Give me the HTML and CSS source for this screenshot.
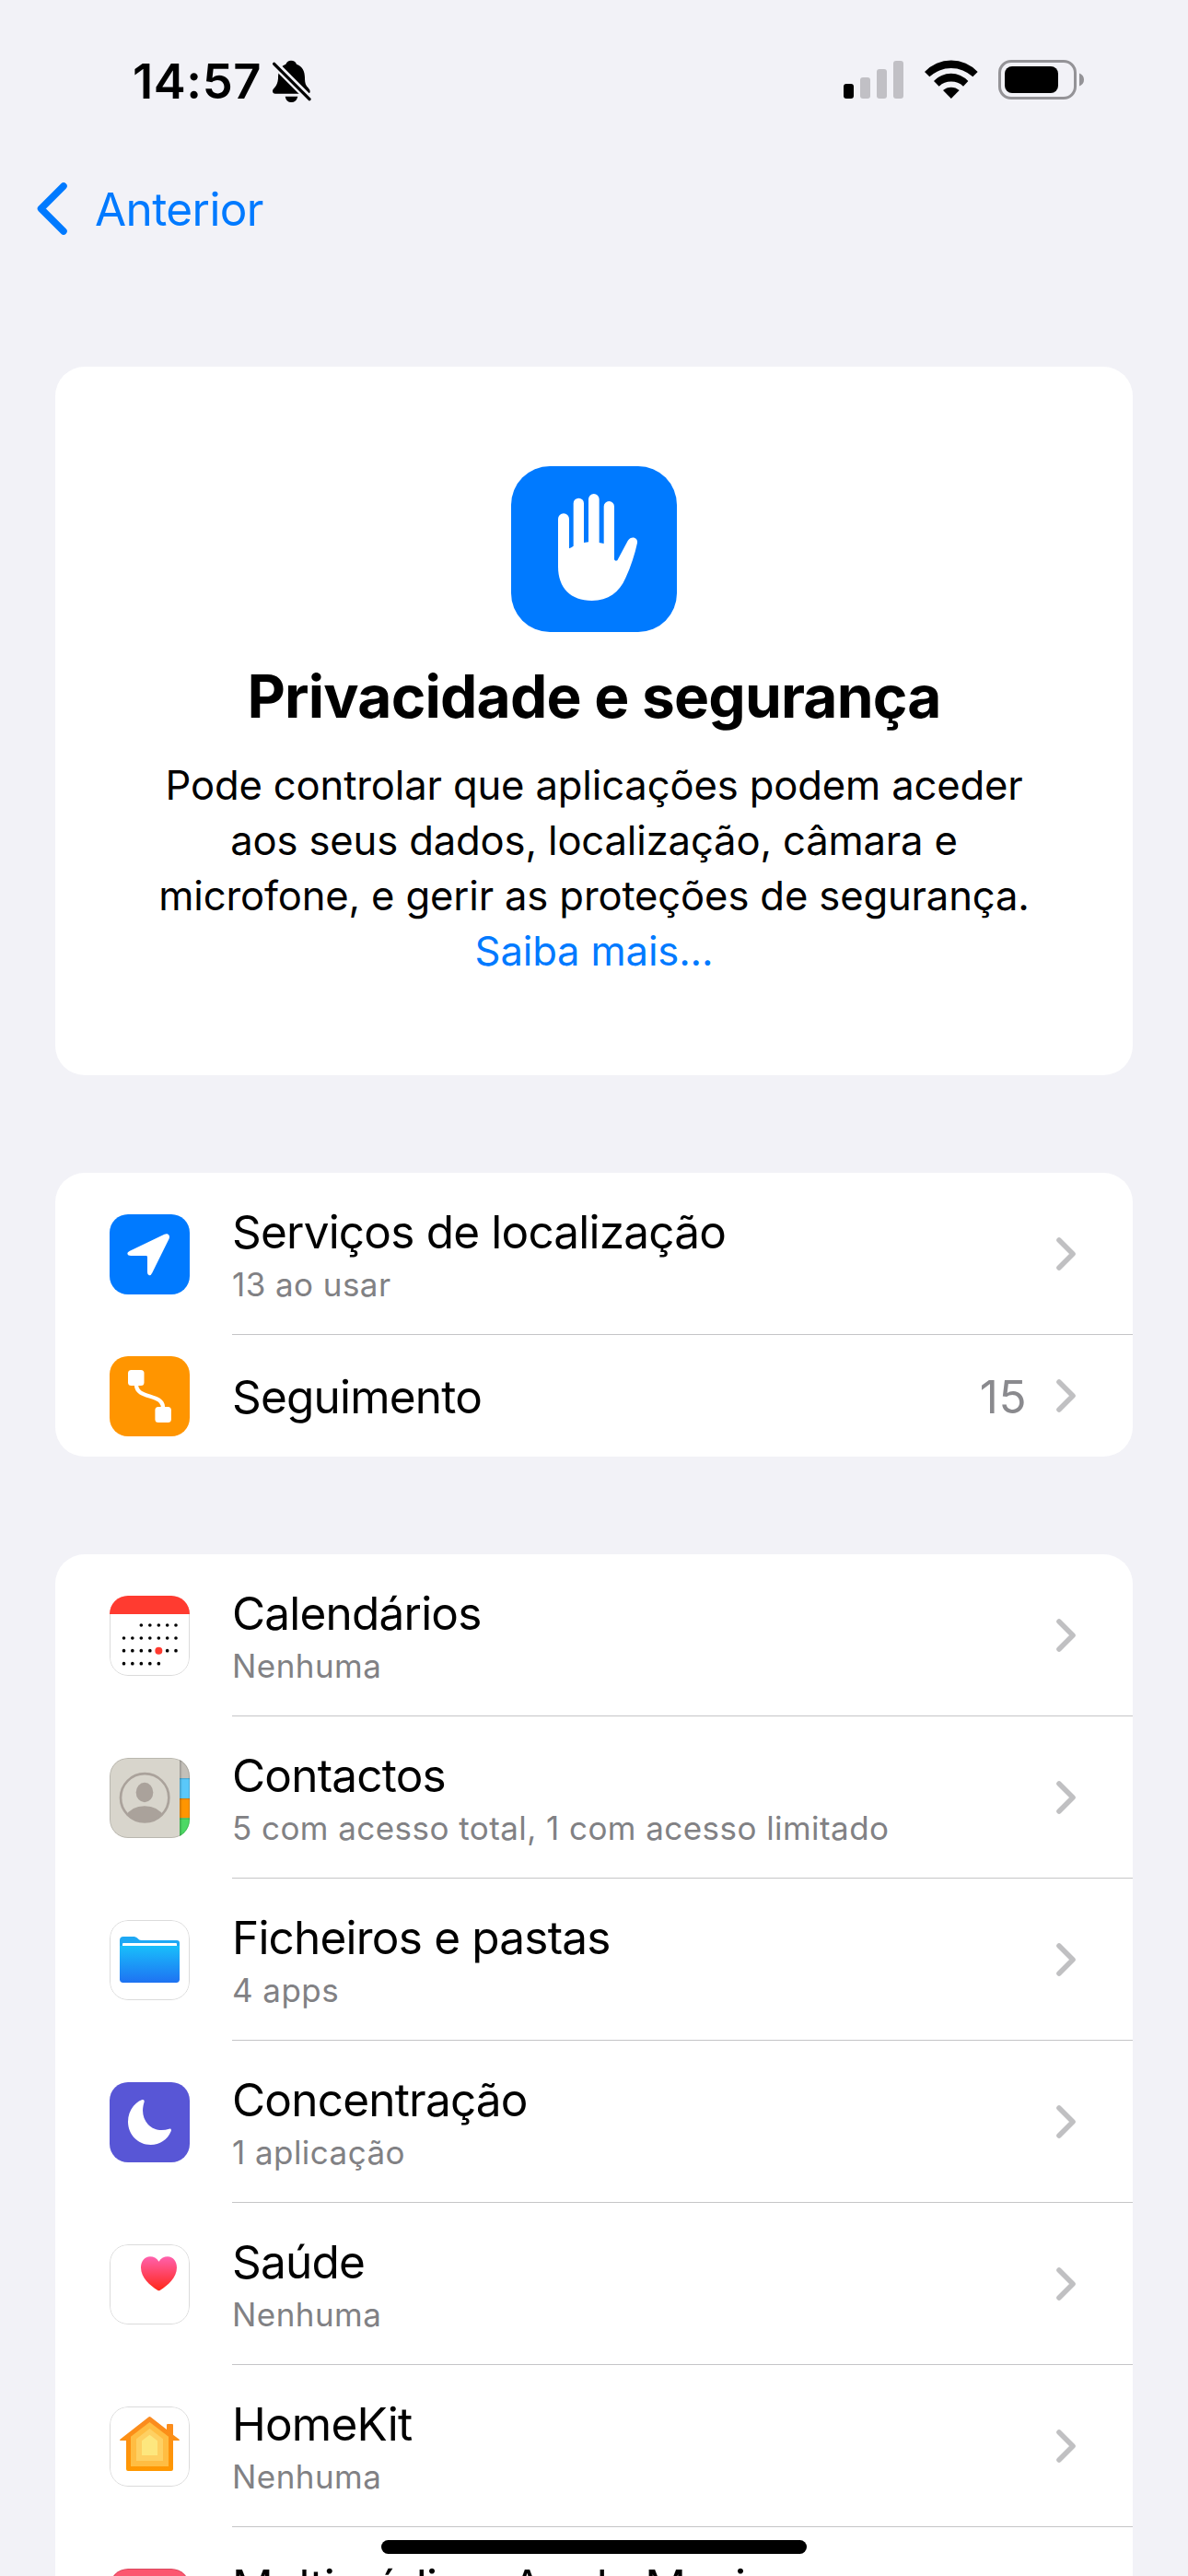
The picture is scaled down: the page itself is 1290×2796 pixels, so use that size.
FILE: index.html
```html
<!DOCTYPE html>
<html lang="pt">
  <head>
    <meta charset="UTF-8">
    <meta name="viewport" content="width=device-width, initial-scale=1.0">
    <title>Privacidade e segurança</title>
    <link rel="stylesheet" href="styles.css">
  </head>
  <body>
    <div class="status-bar">
      <span class="time">14:57</span>
      <svg class="bell" viewBox="888 104 126 138">
        <path d="M948 106Q962 106 966 118C985 124 993 142 993 162C993 182 997 188 1005 196Q1012 203 1010 210Q1008 214 1000 214H897Q888 214 888 205C889 196 904 192 906 165C906 150 908 125 931 118Q936 106 948 106Z"/>
        <path d="M929 223H970Q965 242 949 242Q933 242 929 223Z"/>
        <path d="M885 108L1017 240" stroke="#f2f2f7" stroke-width="25"/>
        <path d="M893 117L1008 232" stroke="#000" stroke-width="10" stroke-linecap="round"/>
      </svg>
      <div class="status-icons">
        <svg class="signal" viewBox="0 0 65 41">
          <rect x="0" y="25" width="11" height="16" rx="3"/>
          <rect x="18" y="18" width="11" height="23" rx="3" fill="#c1c0c5"/>
          <rect x="36" y="9" width="11" height="32" rx="3" fill="#c1c0c5"/>
          <rect x="54" y="0" width="11" height="41" rx="3" fill="#c1c0c5"/>
        </svg>
        <svg class="wifi" viewBox="371 75 174 126">
          <path d="M371 114A118 118 0 0 1 544 114L528 130A103 103 0 0 0 387 130Z"/>
          <path d="M401 144A76 76 0 0 1 513 144L497 161A59 59 0 0 0 418 161Z"/>
          <path d="M431 174A40 40 0 0 1 484 174L457.500 201Z"/>
        </svg>
        <svg class="battery" viewBox="0 0 93 43">
          <rect x="1.500" y="1.500" width="82" height="40" rx="12.500" fill="none" stroke="#949397" stroke-width="3"/>
          <rect x="7" y="7" width="58" height="29" rx="8"/>
          <path d="M88 14.500Q93 16.500 93 21.500T88 28.500Z" fill="#949397"/>
        </svg>
      </div>
    </div>

    <div class="nav-bar">
      <svg class="back-icon" viewBox="0 0 33 57">
        <path d="M29 4L4.500 28.500L29 53" fill="none" stroke="#007aff" stroke-width="7.500" stroke-linecap="round" stroke-linejoin="round"/>
      </svg>
      <a class="back-link">Anterior</a>
    </div>

    <div class="card hero">
      <svg class="hero-icon" viewBox="45 48 540 540">
        <rect x="45" y="48" width="540" height="540" fill="#007aff"/>
        <path d="M198 220a18 18 0 0 1 36 0V316Q241 313 248 308V169a17 17 0 0 1 34 0V297L297 295V155.500a17.500 17.500 0 0 1 35 0V297L347 300V179a17 17 0 0 1 34 0V352Q384 359 391 355L425 291C436 273 459 280 456 298C448 335 435 376 418 412C397 460 362 486 308 486C240 486 198 445 198 375Z" fill="#fff"/>
      </svg>
      <h1>Privacidade e segurança</h1>
      <p>Pode controlar que aplicações podem aceder<br>aos seus dados, localização, câmara e<br>microfone, e gerir as proteções de segurança.<br><a>Saiba mais...</a></p>
    </div>

    <div class="card list">
      <div class="row">
        <svg class="icon" viewBox="0 0 87 87">
          <rect width="87" height="87" fill="#007aff"/>
          <path d="M59.500 21.800L22 39.800Q19 41.300 19.300 43Q19.800 45 23 45H39.500Q41 45 41 46.300V63Q41 66 43 66.300Q45 66.500 46.300 63.500L64.600 26.500C66 23 63.500 20 59.500 21.800Z" fill="#fff"/>
        </svg>
        <div class="row-body">
          <div class="labels">
            <div class="title">Serviços de localização</div>
            <div class="subtitle">13 ao usar</div>
          </div>
          <svg class="chevron" viewBox="0 0 21 36"><path d="M3 3L18 18L3 33"/></svg>
        </div>
      </div>
      <div class="row short">
        <svg class="icon" viewBox="0 0 87 87">
          <rect width="87" height="87" fill="#ff9500"/>
          <rect x="20" y="15" width="17.500" height="17" rx="3.500" fill="#fff"/>
          <rect x="49.400" y="55" width="17.500" height="17" rx="3.500" fill="#fff"/>
          <path d="M29 31C29 47 58 40 58 56" fill="none" stroke="#fff" stroke-width="4.300"/>
        </svg>
        <div class="row-body">
          <div class="labels">
            <div class="title">Seguimento</div>
          </div>
          <span class="value">15</span>
          <svg class="chevron" viewBox="0 0 21 36"><path d="M3 3L18 18L3 33"/></svg>
        </div>
      </div>
    </div>

    <div class="card list">
      <div class="row">
        <svg class="icon" viewBox="57 66 261 261">
          <rect x="57" y="66" width="261" height="261" fill="#fff"/>
          <rect class="outline" x="58.500" y="67.500" width="258" height="258" rx="58"/>
          <path d="M57 66H318V126H57Z" fill="#ff3b30"/>
          <g fill="none" stroke="#000" stroke-width="11" stroke-linecap="round">
            <path d="M160 162h0M188.500 162h0M217 162h0M245 162h0M273 162h0"/>
            <path d="M103.500 204h0M131.500 204h0M160 204h0M188.500 204h0M217 204h0M245 204h0M273 204h0"/>
            <path d="M103.500 245h0M131.500 245h0M160 245h0M188.500 245h0M245 245h0M273 245h0"/>
            <path d="M103.500 287h0M131.500 287h0M160 287h0M188.500 287h0M217 287h0"/>
          </g>
          <circle cx="217" cy="245" r="12" fill="#ff3b30"/>
        </svg>
        <div class="row-body">
          <div class="labels">
            <div class="title">Calendários</div>
            <div class="subtitle">Nenhuma</div>
          </div>
          <svg class="chevron" viewBox="0 0 21 36"><path d="M3 3L18 18L3 33"/></svg>
        </div>
      </div>
      <div class="row">
        <svg class="icon" viewBox="57 594 261 261">
          <defs>
            <clipPath id="avatar"><circle cx="171.500" cy="724" r="80"/></clipPath>
            <linearGradient id="edge"><stop offset="0" stop-color="#000" stop-opacity=".22"/><stop offset="1" stop-color="#000" stop-opacity="0"/></linearGradient>
          </defs>
          <rect x="57" y="594" width="261" height="261" fill="#d8d5cc"/>
          <path d="M285 594H318V660H285Z" fill="#c4c0b9"/>
          <path d="M285 660H318V726H285Z" fill="#5ac8fa"/>
          <path d="M285 726H318V790H285Z" fill="#ff9500"/>
          <path d="M285 790H318V855H285Z" fill="#4cd964"/>
          <path d="M285 660H318V664H285ZM285 726H318V730H285ZM285 790H318V794H285Z" fill="#000" opacity=".15"/>
          <rect x="285" y="594" width="9" height="261" fill="url(#edge)"/>
          <g clip-path="url(#avatar)" fill="#aaa29b">
            <ellipse cx="171" cy="706.500" rx="28" ry="32"/>
            <path d="M108 785Q128 751 171 751T235 785V810H108Z"/>
          </g>
          <circle cx="171.500" cy="724" r="78.500" fill="none" stroke="#aaa29b" stroke-width="8"/>
          <rect class="outline" x="58.500" y="595.500" width="258" height="258" rx="58"/>
        </svg>
        <div class="row-body">
          <div class="labels">
            <div class="title">Contactos</div>
            <div class="subtitle">5 com acesso total, 1 com acesso limitado</div>
          </div>
          <svg class="chevron" viewBox="0 0 21 36"><path d="M3 3L18 18L3 33"/></svg>
        </div>
      </div>
      <div class="row">
        <svg class="icon" viewBox="57 72 261 261">
          <defs>
            <linearGradient id="folder" x2="0" y2="1"><stop offset="0" stop-color="#19bffb"/><stop offset="1" stop-color="#1e72f2"/></linearGradient>
          </defs>
          <rect x="57" y="72" width="261" height="261" fill="#fff"/>
          <path d="M90 160V138Q90 126 102 126H136C148 126 150 138 160 138H276Q285 138 285 147V160Z" fill="#1ea8f4"/>
          <rect x="99" y="147" width="177" height="12" rx="3" fill="#fff"/>
          <path d="M90 156H285V265Q285 276 274 276H101Q90 276 90 265Z" fill="url(#folder)"/>
          <rect class="outline" x="58.500" y="73.500" width="258" height="258" rx="58"/>
        </svg>
        <div class="row-body">
          <div class="labels">
            <div class="title">Ficheiros e pastas</div>
            <div class="subtitle">4 apps</div>
          </div>
          <svg class="chevron" viewBox="0 0 21 36"><path d="M3 3L18 18L3 33"/></svg>
        </div>
      </div>
      <div class="row">
        <svg class="icon" viewBox="57 600 261 261">
          <rect x="57" y="600" width="261" height="261" fill="#5856d6"/>
          <path d="M163 657Q171 655 170 664C160 694 166 720 182 737C200 756 226 760 251 752Q260 750 257 760C246 788 220 804 191 804C150 804 117 771 117 729C117 696 135 668 163 657Z" fill="#fff"/>
        </svg>
        <div class="row-body">
          <div class="labels">
            <div class="title">Concentração</div>
            <div class="subtitle">1 aplicação</div>
          </div>
          <svg class="chevron" viewBox="0 0 21 36"><path d="M3 3L18 18L3 33"/></svg>
        </div>
      </div>
      <div class="row">
        <svg class="icon" viewBox="57 48 261 261">
          <defs>
            <linearGradient id="heart" x2="0" y2="1"><stop offset="0" stop-color="#ff61ad"/><stop offset="1" stop-color="#ff2719"/></linearGradient>
          </defs>
          <rect x="57" y="48" width="261" height="261" fill="#fff"/>
          <path d="M217.500 104C224 93 235 88 246 88C264 88 276 103 276 124C276 157 246 183 222 197Q217.500 200 213 197C189 183 159 157 159 124C159 103 171 88 189 88C200 88 211 93 217.500 104Z" fill="url(#heart)"/>
          <rect class="outline" x="58.500" y="49.500" width="258" height="258" rx="58"/>
        </svg>
        <div class="row-body">
          <div class="labels">
            <div class="title">Saúde</div>
            <div class="subtitle">Nenhuma</div>
          </div>
          <svg class="chevron" viewBox="0 0 21 36"><path d="M3 3L18 18L3 33"/></svg>
        </div>
      </div>
      <div class="row">
        <svg class="icon" viewBox="57 576 261 261">
          <defs>
            <linearGradient id="house" x2="0" y2="1"><stop offset="0" stop-color="#fa8a22"/><stop offset="1" stop-color="#ff9800"/></linearGradient>
          </defs>
          <rect x="57" y="576" width="261" height="261" fill="#fff"/>
          <path d="M183 611Q187.500 607 192 611L243 651V636Q243 633 246 633H261Q264 633 264 636V668L284 683Q287 687 282 687H264V780Q264 786 258 786H117Q111 786 111 780V687H93Q88 687 91 683Z" fill="url(#house)"/>
          <path d="M187.500 627L249 674V771H126V674Z" fill="#ffbd42"/>
          <path d="M187.500 648L231 682V753H144V682Z" fill="#fed062"/>
          <path d="M187.500 668L213 688V735H162V688Z" fill="#fde77e"/>
          <rect class="outline" x="58.500" y="577.500" width="258" height="258" rx="58"/>
        </svg>
        <div class="row-body">
          <div class="labels">
            <div class="title">HomeKit</div>
            <div class="subtitle">Nenhuma</div>
          </div>
          <svg class="chevron" viewBox="0 0 21 36"><path d="M3 3L18 18L3 33"/></svg>
        </div>
      </div>
      <div class="row">
        <svg class="icon" viewBox="0 0 87 87">
          <rect width="87" height="87" fill="#fc5770"/>
          <rect class="outline thin" x=".5" y=".5" width="86" height="86" rx="19.500"/>
        </svg>
        <div class="row-body">
          <div class="labels top">
            <div class="title">Multimédia e Apple Music</div>
          </div>
        </div>
      </div>
    </div>

    <div class="home-indicator"></div>
  </body>
</html>
```

FILE: styles.css
```css
* {
  box-sizing: border-box;
}

body {
  font-family: Inter, "Liberation Sans", sans-serif;
  background-color: #f2f2f7;
  color: #000;
  margin: 0;
  height: 2796px;
  overflow: hidden;
}

svg {
  display: block;
  flex: none;
}

a {
  color: #007aff;
  text-decoration: none;
}

.status-bar {
  display: flex;
  height: 197px;
  padding: 58px 113px 0 144px;
}

.time {
  width: 152px;
  font-size: 52.5px;
  font-weight: 600;
  line-height: 60px;
  letter-spacing: 0.6px;
}

.bell {
  width: 42px;
  height: 46px;
  margin-top: 7px;
}

.status-icons {
  display: flex;
  margin-left: auto;
  padding-top: 7px;
}

.signal {
  width: 65px;
  height: 41px;
  margin-top: 1px;
}

.wifi {
  width: 58px;
  height: 42px;
  margin-left: 23px;
}

.battery {
  width: 93px;
  height: 43px;
  margin-left: 22px;
}

.nav-bar {
  display: flex;
  height: 201px;
  padding-left: 40px;
}

.back-icon {
  width: 33px;
  height: 57px;
  margin-top: 1px;
}

.back-link {
  margin-left: 30px;
  font-size: 49.5px;
  line-height: 60px;
  letter-spacing: -0.6px;
}

.card {
  margin: 0 60px 106px;
  background-color: #fff;
  border-radius: 32px;
  overflow: hidden;
}

.hero {
  display: flex;
  flex-direction: column;
  align-items: center;
  height: 769px;
  padding-top: 108px;
  text-align: center;
}

.hero-icon {
  width: 180px;
  height: 180px;
  border-radius: 42px;
}

h1 {
  margin: 30px 0 27px;
  font-size: 64px;
  font-weight: 700;
  line-height: 80px;
  letter-spacing: -0.8px;
}

p {
  margin: 0;
  font-size: 43.6px;
  line-height: 60px;
  letter-spacing: -0.15px;
  white-space: nowrap;
}

.row {
  display: flex;
  align-items: center;
  height: 176px;
  padding-left: 59px;
}

/* the last row runs off the bottom of the screen */
.row:nth-child(7) {
  align-items: flex-start;
  height: 53px;
}

.icon {
  width: 87px;
  height: 87px;
  margin-top: 1px;
  border-radius: 20px;
}

.row:nth-child(7) .icon {
  margin-top: 45px;
}

.outline {
  fill: none;
  stroke: rgba(0, 0, 0, 0.14);
  stroke-width: 3;
}

.thin {
  stroke-width: 1;
}

.row-body {
  display: flex;
  align-items: center;
  flex: 1;
  height: 100%;
  margin-left: 46px;
  padding: 2px 62px 0 0;
  border-bottom: 1px solid #c5c5c7;
}

.row:last-child .row-body {
  border-bottom: none;
}

.short {
  height: 132px;
}

.labels {
  flex: 1;
  white-space: nowrap;
}

.top {
  align-self: flex-start;
  padding-top: 32px;
}

.list:nth-last-child(2) {
  margin-bottom: 0;
  border-radius: 32px 32px 0 0;
}

.title {
  font-size: 49.5px;
  line-height: 60px;
  letter-spacing: -0.8px;
}

.subtitle {
  margin-top: 5px;
  color: #818184;
  font-size: 35px;
  line-height: 44px;
  letter-spacing: 0.44px;
}

.value {
  margin-right: 32px;
  color: #8a8a8e;
  font-size: 49.5px;
  line-height: 60px;
  letter-spacing: 0.5px;
}

.chevron {
  width: 21px;
  height: 36px;
  margin-top: -2px;
  fill: none;
  stroke: #c0c0c2;
  stroke-width: 5.6;
  stroke-linecap: round;
  stroke-linejoin: round;
}

.home-indicator {
  position: fixed;
  bottom: 24px;
  left: 414px;
  width: 462px;
  height: 15px;
  background-color: #000;
  border-radius: 8px;
}
```
